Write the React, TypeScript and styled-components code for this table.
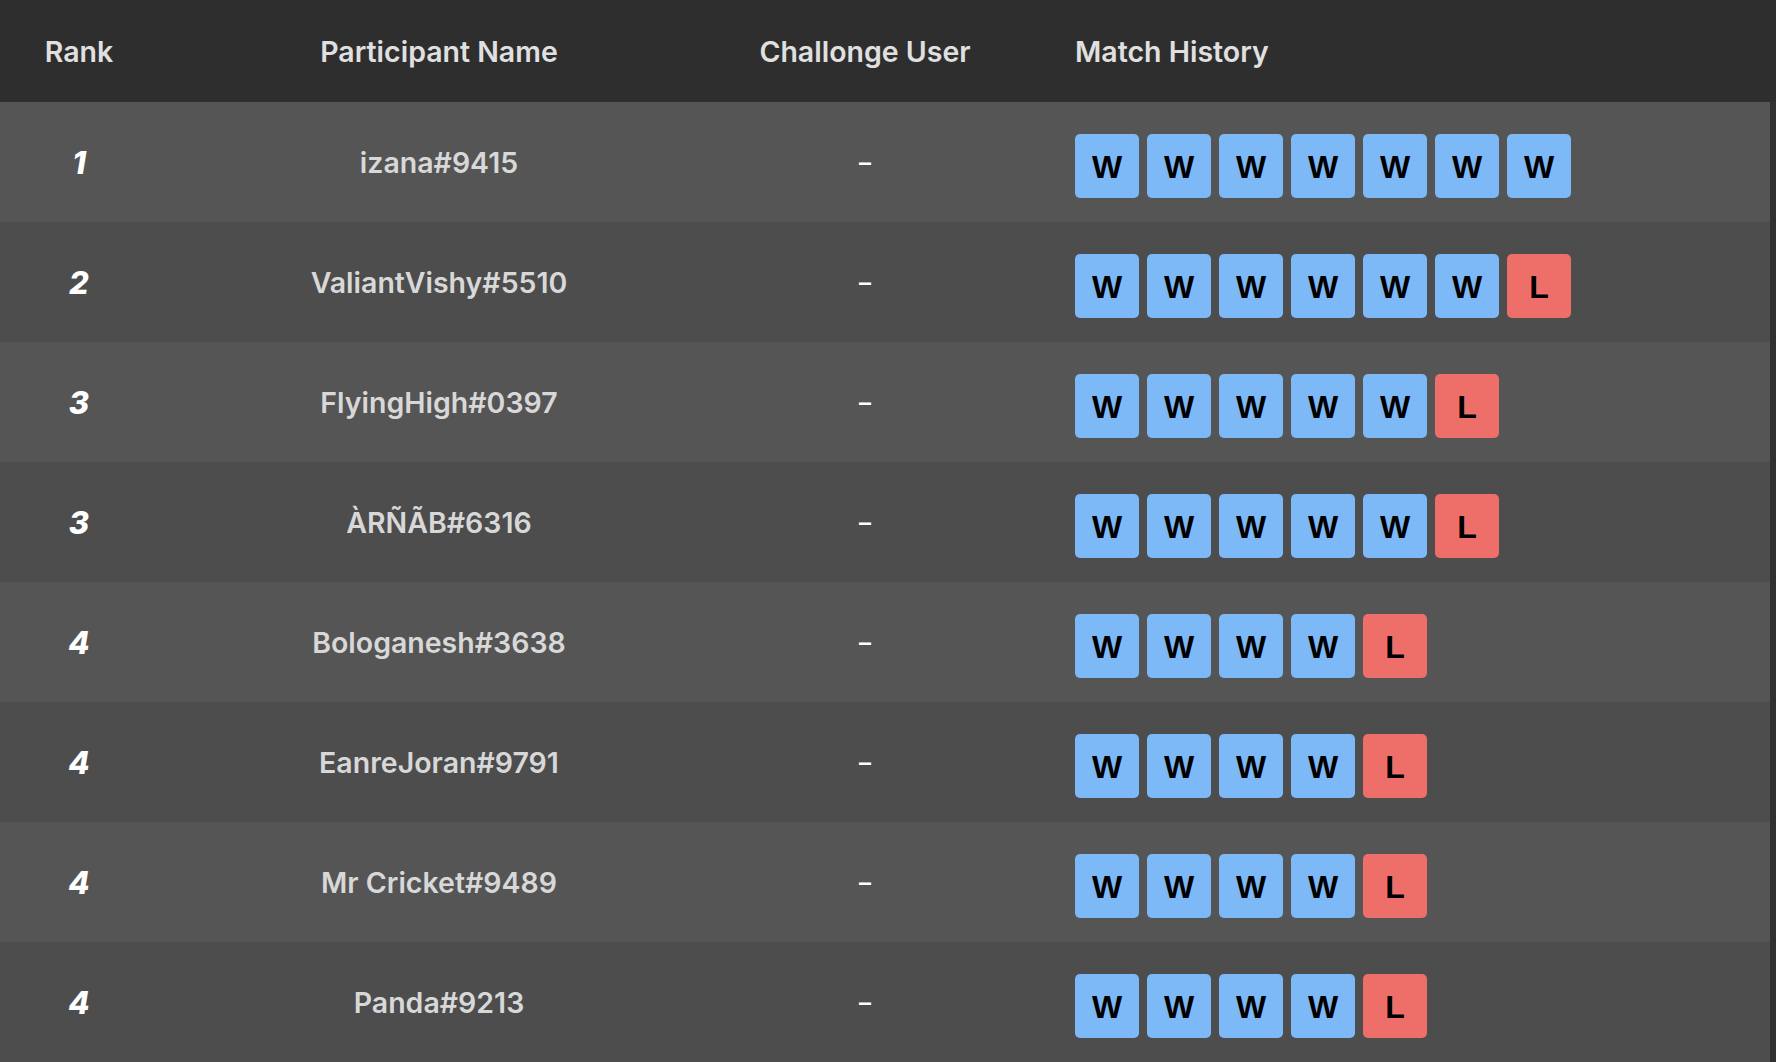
import React from 'react';
import styled, {createGlobalStyle} from 'styled-components';

const GlobalStyle = createGlobalStyle`
    html, body {
        margin: 0;
        padding: 0;
        background: #313131;
        font-family: Inter, "Noto Sans", sans-serif;
    }
`

const Board = styled.div`
    width: 1776px;
    height: 1062px;
    overflow: hidden;
`

const Row = styled.div<{ $head?: boolean; $odd?: boolean }>`
    display: grid;
    grid-template-columns: 158px 562px 290px 1fr;
    align-items: center;
    height: ${({$head}) => ($head ? '102px' : '120px')};
    margin-right: ${({$head}) => ($head ? '0' : '6px')};
    background: ${({$head, $odd}) => ($head ? '#2e2e2e' : $odd ? '#555555' : '#4d4d4d')};
`

const HeadCell = styled.div<{ $left?: boolean }>`
    text-align: ${({$left}) => ($left ? 'left' : 'center')};
    padding-left: ${({$left}) => ($left ? '65px' : '0')};
    color: #e0e0e0;
    font-size: 28.5px;
    font-weight: 600;
`

const RankCell = styled.div`
    text-align: center;
    color: #ffffff;
    font-size: 31px;
    font-weight: 800;
    font-style: italic;
`

const NameCell = styled.div`
    text-align: center;
    color: #d8d8d8;
    font-size: 28.5px;
    font-weight: 600;
`

const Dash = styled.div`
    text-align: center;
    color: #ffffff;
    font-size: 24px;
    font-weight: 600;
`

const History = styled.div`
    display: flex;
    gap: 8px;
    padding-left: 65px;
    margin-top: 8px;
`

const Badge = styled.div<{ $win: boolean }>`
    width: 64px;
    height: 64px;
    border-radius: 5px;
    display: flex;
    align-items: center;
    justify-content: center;
    padding-top: 2px;
    box-sizing: border-box;
    background: ${({$win}) => ($win ? '#7db9f7' : '#ee6f6a')};
    color: #000000;
    font-family: "Liberation Sans", Arial, sans-serif;
    font-size: 32px;
    font-weight: 700;
`

type Player = {
    rank: number;
    name: string;
    history: string;
}

const PLAYERS: Player[] = [
    {rank: 1, name: 'izana#9415', history: 'WWWWWWW'},
    {rank: 2, name: 'ValiantVishy#5510', history: 'WWWWWWL'},
    {rank: 3, name: 'FlyingHigh#0397', history: 'WWWWWL'},
    {rank: 3, name: 'ÀRÑÃB#6316', history: 'WWWWWL'},
    {rank: 4, name: 'Bologanesh#3638', history: 'WWWWL'},
    {rank: 4, name: 'EanreJoran#9791', history: 'WWWWL'},
    {rank: 4, name: 'Mr Cricket#9489', history: 'WWWWL'},
    {rank: 4, name: 'Panda#9213', history: 'WWWWL'},
];

const App: React.FC = () => {
    return (
        <>
            <GlobalStyle/>
            <Board>
                <Row $head>
                    <HeadCell>Rank</HeadCell>
                    <HeadCell>Participant Name</HeadCell>
                    <HeadCell>Challonge User</HeadCell>
                    <HeadCell $left>Match History</HeadCell>
                </Row>
                {PLAYERS.map((p, i) => (
                    <Row key={p.name} $odd={i % 2 === 0}>
                        <RankCell>{p.rank}</RankCell>
                        <NameCell>{p.name}</NameCell>
                        <Dash>–</Dash>
                        <History>
                            {p.history.split('').map((r, j) => (
                                <Badge key={j} $win={r === 'W'}>{r}</Badge>
                            ))}
                        </History>
                    </Row>
                ))}
            </Board>
        </>
    )
};

export default App;
